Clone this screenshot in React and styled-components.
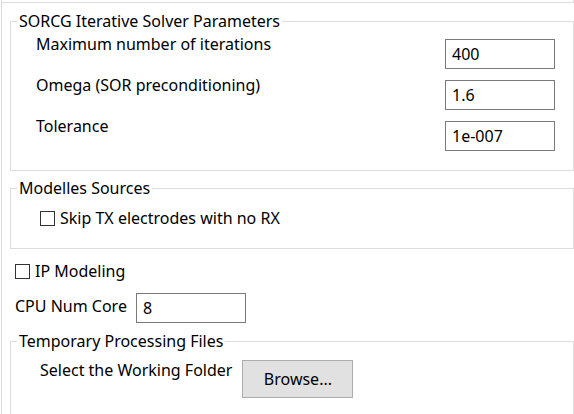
import React from "react";
import styled, { createGlobalStyle } from "styled-components";

const GlobalStyle = createGlobalStyle`
  html, body {
    margin: 0;
    padding: 0;
    background: #ffffff;
  }
  body {
    font-family: "Noto Sans", "Open Sans", sans-serif;
    font-size: 16px;
    color: #000000;
  }
`;

const Panel = styled.div`
  margin-left: 1px;
  border-left: 1px solid #dcdcdc;
  height: 414px;
  width: 573px;
  box-sizing: border-box;
  overflow: hidden;
`;

const TopStub = styled.div`
  height: 2px;
  border-bottom: 1px solid #dcdcdc;
  border-right: 1px solid #dcdcdc;
`;

const Content = styled.div`
  margin: 0 0 0 8px;
  display: flex;
  flex-direction: column;
`;

const Group = styled.fieldset`
  margin: ${(p) => p.$top || 0}px 0 0 0;
  padding: ${(p) => p.$padTop || 8}px 18px ${(p) => p.$padBottom || 19}px 6px;
  border: 1px solid #dcdcdc;
  min-width: 0;
  display: flex;
  flex-direction: column;
  gap: 11px;
`;

const Legend = styled.legend`
  padding: 0 2px;
  line-height: 20px;
`;

const ParamRow = styled.div`
  display: flex;
  justify-content: space-between;
  align-items: flex-start;
  padding-left: 19px;
`;

const Label = styled.span`
  line-height: 20px;
  margin-top: ${(p) => p.$shift || 0}px;
  white-space: nowrap;
`;

const TextBox = styled.input`
  box-sizing: border-box;
  width: 110px;
  height: 30px;
  border: 1px solid #7a7a7a;
  padding: 0 6px;
  margin: 0;
  font: inherit;
  color: #000;
  background: #fff;
  outline: none;
`;

const CheckRow = styled.label`
  display: flex;
  align-items: center;
  gap: 5px;
  line-height: 20px;
  padding-left: ${(p) => p.$indent || 0}px;
  margin-top: ${(p) => p.$top || 0}px;
`;

const Check = styled.input.attrs({ type: "checkbox" })`
  appearance: none;
  margin: 0;
  width: 15px;
  height: 15px;
  box-sizing: border-box;
  border: 1px solid #333333;
  background: #fff;
`;

const InlineRow = styled.div`
  display: flex;
  align-items: ${(p) => p.$align || "center"};
  gap: ${(p) => p.$gap || 7}px;
  padding-left: ${(p) => p.$indent || 0}px;
  margin-top: ${(p) => p.$top || 0}px;
`;

const Button = styled.button`
  width: 111px;
  height: 38px;
  box-sizing: border-box;
  border: 1px solid #adadad;
  background: #e1e1e1;
  font: inherit;
  color: #000;
  padding: 0;
  margin: 0;
`;

const params = [
  { label: "Maximum number of iterations", value: "400" },
  { label: "Omega (SOR preconditioning)", value: "1.6" },
  { label: "Tolerance", value: "1e-007" },
];

export default function App() {
  return (
    <>
      <GlobalStyle />
      <Panel>
        <TopStub />
        <Content>
          <Group $top={8}>
            <Legend>SORCG Iterative Solver Parameters</Legend>
            {params.map((p) => (
              <ParamRow key={p.label}>
                <Label $shift={-5}>{p.label}</Label>
                <TextBox defaultValue={p.value} />
              </ParamRow>
            ))}
          </Group>

          <Group $top={7} $padTop={10} $padBottom={20}>
            <Legend>Modelles Sources</Legend>
            <CheckRow $indent={23}>
              <Check />
              <span>Skip TX electrodes with no RX</span>
            </CheckRow>
          </Group>

          <CheckRow $indent={5} $top={12}>
            <Check />
            <span>IP Modeling</span>
          </CheckRow>

          <InlineRow $indent={5} $top={12} $gap={9}>
            <Label $shift={-4}>CPU Num Core</Label>
            <TextBox defaultValue="8" />
          </InlineRow>

          <Group $top={8} $padTop={9} $padBottom={20}>
            <Legend>Temporary Processing Files</Legend>
            <InlineRow $indent={23} $align="flex-start" $gap={10}>
              <Label>Select the Working Folder</Label>
              <Button>Browse...</Button>
            </InlineRow>
          </Group>
        </Content>
      </Panel>
    </>
  );
}
